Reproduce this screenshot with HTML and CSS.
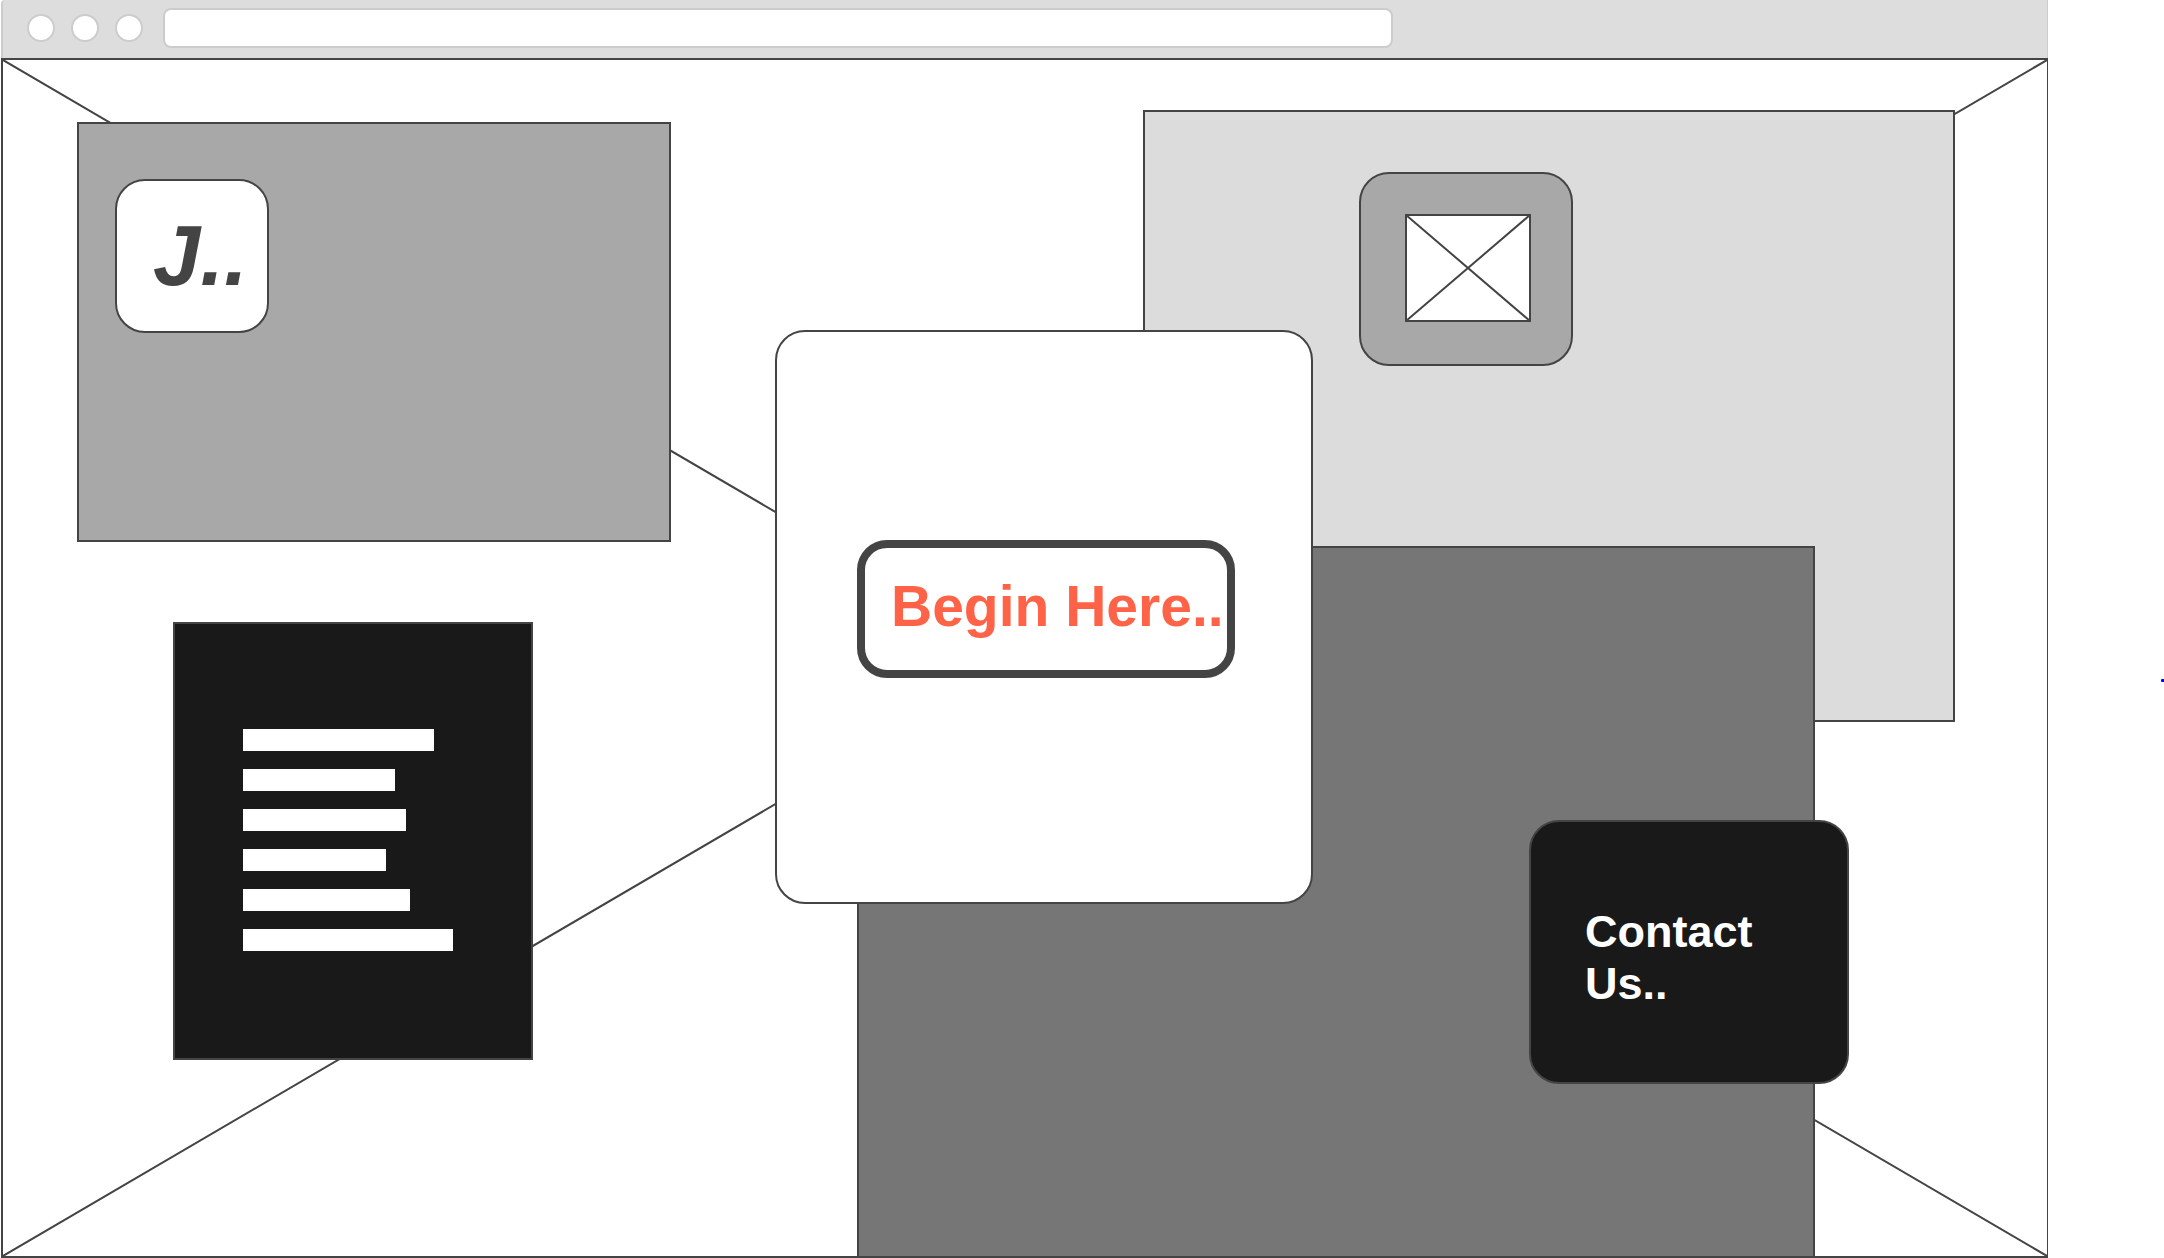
FILE: index.html
```html
<!DOCTYPE html>
<html lang="en">
<head>
  <meta charset="utf-8">
  <title>Wireframe</title>
  <link rel="stylesheet" href="styles.css">
</head>
<body>
  <div class="browser">
    <header class="toolbar">
      <span class="dot"></span>
      <span class="dot"></span>
      <span class="dot"></span>
      <input class="address" type="text" aria-label="Address">
    </header>
    <main class="canvas">
      <svg class="cross" viewBox="0 0 100 100" preserveAspectRatio="none" aria-hidden="true">
        <path d="M0 0L100 100M100 0L0 100"/>
      </svg>

      <section class="node panel-logo">
        <a class="logo" href="#">J..</a>
      </section>

      <section class="node panel-media">
        <div class="media">
          <svg class="picture" viewBox="0 0 126 108" aria-hidden="true">
            <path d="M1 1H125V107H1ZL125 107M125 1L1 107"/>
          </svg>
        </div>
      </section>

      <section class="node panel-base"></section>

      <section class="node panel-start">
        <button class="start" type="button">Begin Here..</button>
      </section>

      <section class="node panel-text">
        <span class="line" style="width: 191px"></span>
        <span class="line" style="width: 152px"></span>
        <span class="line" style="width: 163px"></span>
        <span class="line" style="width: 143px"></span>
        <span class="line" style="width: 167px"></span>
        <span class="line" style="width: 210px"></span>
      </section>

      <button class="node contact" type="button">Contact Us..</button>
    </main>
  </div>
  <span class="marker"></span>
</body>
</html>
```

FILE: styles.css
```css
* {
  box-sizing: border-box;
}

body {
  margin: 0;
  background: #fff;
  color: #444;
  font-family: "Liberation Sans", Arial, sans-serif;
  font-weight: 700;
  overflow: hidden;
}

.browser {
  display: flex;
  flex-direction: column;
  min-height: 100vh;
  margin: 0 116px 0 1px;
}

.toolbar {
  display: flex;
  align-items: center;
  gap: 16px;
  padding: 8px 24px 10px;
  background: #ddd;
  border: solid #ccc;
  border-width: 0 1px 0 2px;
  border-top-left-radius: 4px;
}

.dot {
  flex: none;
  width: 28px;
  height: 28px;
  background: #fff;
  border: 2px solid #ccc;
  border-radius: 50%;
}

.address {
  flex: 0 1 1230px;
  min-width: 0;
  height: 40px;
  margin-left: 4px;
  padding: 0 12px;
  background: #fff;
  border: 2px solid #ccc;
  border-radius: 8px;
  font: inherit;
}

.canvas {
  position: relative;
  flex: 1;
  background: #fff;
  border: 2px solid #444;
  border-right-width: 1px;
}

.cross {
  position: absolute;
  width: 100%;
  height: 100%;
}

.cross path {
  stroke: #444;
  stroke-width: 2;
  vector-effect: non-scaling-stroke;
}

/* Shapes placed freely on the canvas */
.node {
  position: absolute;
  border: 2px solid #444;
}

.panel-logo {
  left: 74px;
  top: 62px;
  width: 594px;
  height: 420px;
  padding: 55px 36px;
  background: #a8a8a8;
}

.logo {
  display: block;
  width: 154px;
  height: 154px;
  padding: 27px 0 0 36px;
  background: #fff;
  border: 2px solid #444;
  border-radius: 30px;
  color: #444;
  font-size: 85px;
  font-style: italic;
  line-height: 96px;
  text-decoration: none;
}

.panel-media {
  left: 1140px;
  top: 50px;
  width: 812px;
  height: 612px;
  padding: 60px 214px;
  background: #dcdcdc;
}

.media {
  width: 214px;
  height: 194px;
  padding: 40px 44px;
  background: #a8a8a8;
  border: 2px solid #444;
  border-radius: 30px;
}

.picture {
  display: block;
  width: 126px;
  height: 108px;
}

.picture path {
  fill: #fff;
  stroke: #444;
  stroke-width: 2;
}

.panel-base {
  left: 854px;
  top: 486px;
  bottom: 0;
  width: 958px;
  background: #767676;
  border-bottom: 0;
}

.panel-start {
  left: 772px;
  top: 270px;
  width: 538px;
  height: 574px;
  padding: 208px 80px;
  background: #fff;
  border-radius: 30px;
}

.start {
  width: 378px;
  padding: 26px 0 32px 26px;
  background: #fff;
  border: 8px solid #444;
  border-radius: 30px;
  color: #ff6347;
  font: inherit;
  font-size: 57px;
  line-height: 64px;
  text-align: left;
  white-space: nowrap;
}

.panel-text {
  display: flex;
  flex-direction: column;
  gap: 18px;
  left: 170px;
  top: 562px;
  width: 360px;
  height: 438px;
  padding: 105px 68px;
  background: #191919;
}

.line {
  height: 22px;
  background: #fff;
}

.contact {
  left: 1526px;
  top: 760px;
  width: 320px;
  padding: 84px 54px 72px;
  background: #191919;
  border-radius: 30px;
  color: #fff;
  font: inherit;
  font-size: 45px;
  line-height: 52px;
  text-align: left;
}

.marker {
  position: absolute;
  top: 679px;
  right: 0;
  width: 3px;
  height: 3px;
  background: #00f;
  border-radius: 1px 0 0 1px;
}
```
